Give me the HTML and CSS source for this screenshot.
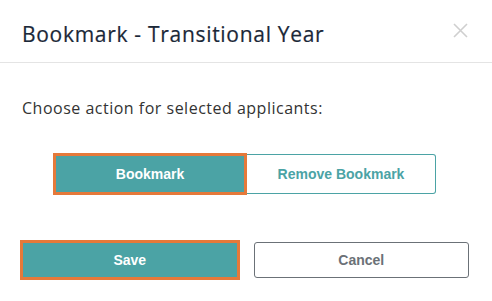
FILE: index.html
```html
<!DOCTYPE html>
<html lang="en">
  <head>
    <meta charset="UTF-8">
    <meta name="viewport" content="width=device-width, initial-scale=1.0">
    <title>Bookmark</title>
    <link rel="stylesheet" href="styles.css">
  </head>
  <body>
    <!-- Bookmark modal -->
    <div class="modal">
      <div class="modal-header">
        <h2 class="modal-title">Bookmark - Transitional Year</h2>
        <button class="close" aria-label="Close">
          <svg width="15" height="15" viewBox="0 0 15 15">
            <path d="M1 1 L14 14 M14 1 L1 14" stroke="#cfcfcf" stroke-width="1.6" fill="none"/>
          </svg>
        </button>
      </div>
      <div class="modal-body">
        <p>Choose action for selected applicants:</p>
        <div class="toggle-group">
          <button class="toggle active">Bookmark</button>
          <button class="toggle">Remove Bookmark</button>
        </div>
      </div>
      <div class="modal-footer">
        <button class="btn btn-save">Save</button>
        <button class="btn btn-cancel">Cancel</button>
      </div>
    </div>
  </body>
</html>
```

FILE: styles.css
```css
/* General */
body {
  margin: 0;
  background: #fff;
  font-family: "Open Sans", "Liberation Sans", sans-serif;
  color: #333;
}

.modal {
  width: 492px;
  height: 301px;
  background: #fff;
}

/* Header */
.modal-header {
  display: flex;
  justify-content: space-between;
  align-items: center;
  height: 63px;
  padding: 0 24px 0 22px;
  border-bottom: 1px solid #e4e4e4;
  box-sizing: border-box;
}

.modal-title {
  margin: 0;
  font-size: 21px;
  font-weight: 400;
  letter-spacing: 0.7px;
  color: #1b2838;
  line-height: 24px;
  padding-top: 6px;
  -webkit-text-stroke: 0.2px #1b2838;
}

.close {
  background: none;
  border: none;
  padding: 0;
  width: 15px;
  height: 15px;
  margin-top: -2px;
  cursor: pointer;
}

.close svg {
  display: block;
}

/* Body */
.modal-body {
  padding: 35px 22px 0;
}

.modal-body p {
  margin: 0;
  font-size: 16px;
  line-height: 20px;
  letter-spacing: 0.5px;
  color: #333;
}

.toggle-group {
  display: flex;
  justify-content: center;
  align-items: center;
  margin-top: 35px;
  height: 42px;
  padding-right: 3px;
}

.toggle {
  font-family: "Liberation Sans", sans-serif;
  font-size: 14px;
  font-weight: 700;
  height: 40px;
  width: 189px;
  background: #fff;
  color: #4ba3a5;
  border: 1px solid #4ba3a5;
  border-left: none;
  border-radius: 0 3px 3px 0;
  cursor: pointer;
}

.toggle.active {
  height: 42px;
  width: 194px;
  background: #4ba3a5;
  color: #fff;
  border: 3px solid #e5793a;
  border-radius: 0;
}

/* Footer */
.modal-footer {
  display: flex;
  gap: 16px;
  padding: 47px 23px 0 22px;
}

.btn {
  flex: 1;
  height: 36px;
  font-family: "Liberation Sans", sans-serif;
  font-size: 14px;
  font-weight: 700;
  border-radius: 3px;
  cursor: pointer;
}

.btn-save {
  background: #4ba3a5;
  color: #fff;
  border: 1px solid #e5793a;
  border-radius: 0;
  box-shadow: 0 0 0 2px #e5793a;
}

.btn-cancel {
  background: #fff;
  color: #6b7177;
  border: 1px solid #6b7177;
}
```
